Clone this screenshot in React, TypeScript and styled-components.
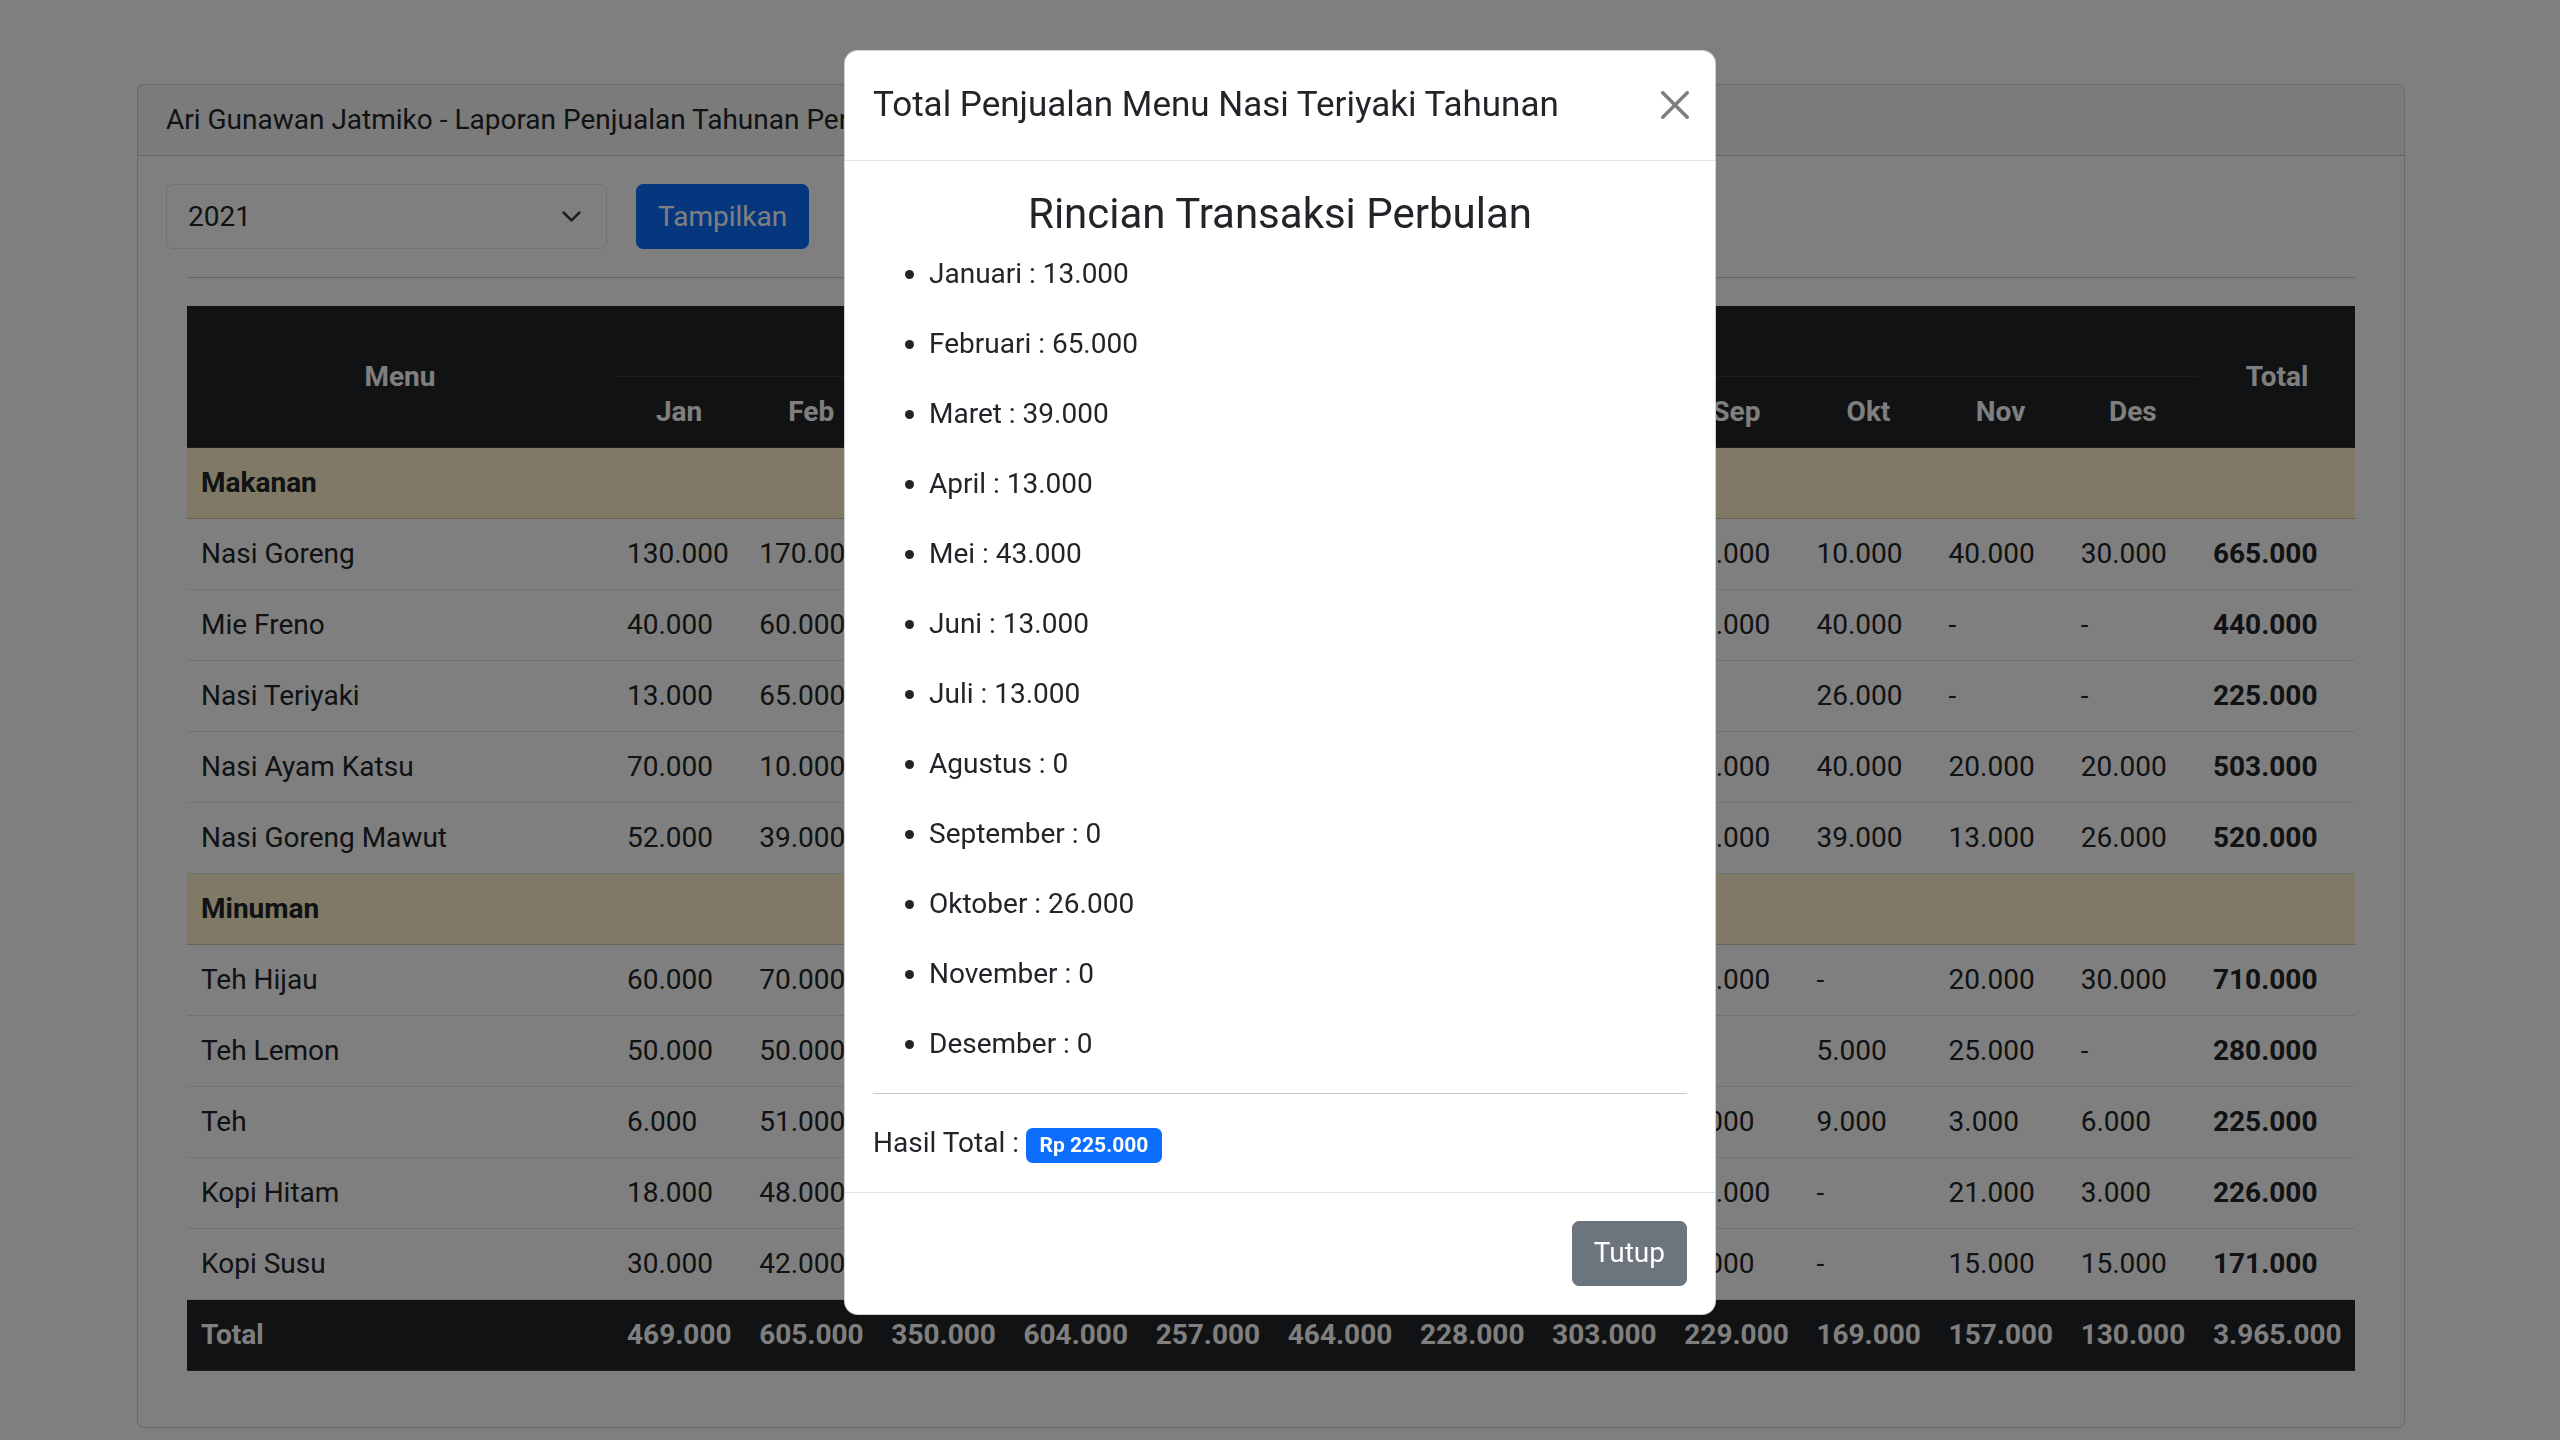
import React from 'react';
import styled, { createGlobalStyle } from 'styled-components';

const GlobalStyle = createGlobalStyle`
  *, *::before, *::after { box-sizing: border-box; }
  html, body { margin: 0; padding: 0; }
  body {
    background: #fff;
    font-family: Roboto, "Liberation Sans", Arial, sans-serif;
    font-size: 28px;
    line-height: 1.5;
    color: #212529;
    overflow: hidden;
  }
`;

const Page = styled.div`
  width: 2560px;
  height: 1440px;
  padding: 84px 0 0 116px;
`;

const Container = styled.div`
  width: 2310px;
  padding: 0 21px;
`;

const Card = styled.section`
  background: #fff;
  border: 1px solid rgba(0, 0, 0, 0.175);
  border-radius: 7px;
  overflow: hidden;
`;

const CardHeader = styled.header`
  padding: 14px 28px;
  line-height: 42px;
  background: rgba(0, 0, 0, 0.03);
  border-bottom: 1px solid rgba(0, 0, 0, 0.175);
  white-space: nowrap;
`;

const CardBody = styled.div`
  padding: 28px;
`;

const FilterRow = styled.div`
  display: flex;
  align-items: center;
  gap: 29px;
`;

const SelectBox = styled.div`
  width: 441px;
  height: 65px;
  display: flex;
  align-items: center;
  justify-content: space-between;
  padding: 0 21px;
  border: 1px solid #dee2e6;
  border-radius: 7px;
  line-height: 42px;
  background: #fff;
`;

const Chevron = styled.svg`
  width: 21px;
  height: 21px;
  margin-right: 3px;
`;

const Button = styled.button<{ $variant: 'primary' | 'secondary' }>`
  font-family: inherit;
  font-size: 28px;
  line-height: 42px;
  padding: 10.5px 21px;
  border-radius: 7px;
  color: #fff;
  cursor: pointer;
  background: ${(p) => (p.$variant === 'primary' ? '#0d6efd' : '#6c757d')};
  border: 1px solid ${(p) => (p.$variant === 'primary' ? '#0d6efd' : '#6c757d')};
`;

const Divider = styled.hr`
  margin: 28px 21px;
  border: 0;
  border-top: 1px solid #212529;
  opacity: 0.25;
`;

const TableWrap = styled.div`
  padding: 0 21px;
`;

const Table = styled.table`
  width: 100%;
  border-collapse: collapse;
  table-layout: fixed;
  margin-bottom: 28px;
  color: #212529;
`;

const HeadCell = styled.th`
  background: #212529;
  color: #fff;
  font-weight: 700;
  text-align: center;
  vertical-align: middle;
  padding: 14px;
  line-height: 42px;
  border-bottom: 1px solid #373b3e;
  white-space: nowrap;
`;

const Row = styled.tr<{ $group?: boolean }>`
  background: ${(p) => (p.$group ? '#fff3cd' : '#fff')};
`;

const Cell = styled.td<{ $bold?: boolean; $group?: boolean }>`
  padding: 14px;
  line-height: 42px;
  text-align: left;
  vertical-align: middle;
  white-space: nowrap;
  overflow: hidden;
  font-weight: ${(p) => (p.$bold ? 700 : 400)};
  border-bottom: 1px solid ${(p) => (p.$group ? '#ccc2a4' : '#dee2e6')};
`;

const FootCell = styled.td`
  background: #212529;
  color: #fff;
  font-weight: 700;
  padding: 14px;
  line-height: 42px;
  white-space: nowrap;
  border-bottom: 1px solid #373b3e;
`;

const Backdrop = styled.div`
  position: fixed;
  inset: 0;
  background: rgba(0, 0, 0, 0.5);
  z-index: 1050;
`;

const ModalDialog = styled.div`
  position: fixed;
  top: 50px;
  left: 844px;
  width: 872px;
  z-index: 1055;
`;

const ModalContent = styled.div`
  display: flex;
  flex-direction: column;
  background: #fff;
  border: 1px solid rgba(0, 0, 0, 0.175);
  border-radius: 14px;
`;

const ModalHeader = styled.div`
  display: flex;
  align-items: center;
  padding: 28px;
  border-bottom: 1px solid #dee2e6;
`;

const ModalTitle = styled.h5`
  margin: 0;
  font-size: 35px;
  font-weight: 400;
  line-height: 1.5;
  white-space: nowrap;
`;

const CloseButton = styled.button`
  width: 42px;
  height: 42px;
  padding: 7px;
  margin: -14px -9px -14px auto;
  border: 0;
  background: transparent;
  opacity: 0.5;
  display: flex;
  align-items: center;
  justify-content: center;
  cursor: pointer;
`;

const ModalBody = styled.div`
  padding: 28px;
`;

const BodyHeading = styled.h4`
  margin: 0 0 14px;
  font-size: 42px;
  font-weight: 400;
  line-height: 1.2;
  text-align: center;
`;

const MonthList = styled.ul`
  margin: 0;
  padding-left: 56px;
`;

const MonthItem = styled.li`
  line-height: 42px;
  margin-bottom: 28px;
  &:last-child {
    margin-bottom: 0;
  }
`;

const ModalRule = styled.hr`
  margin: 28px 0;
  border: 0;
  border-top: 1px solid #212529;
  opacity: 0.25;
`;

const TotalLine = styled.p`
  margin: 0;
  line-height: 42px;
`;

const Badge = styled.span`
  display: inline-block;
  padding: 7.35px 13.65px;
  font-size: 21px;
  font-weight: 700;
  line-height: 1;
  color: #fff;
  background: #0d6efd;
  border-radius: 6.5px;
  white-space: nowrap;
  vertical-align: baseline;
`;

const ModalFooter = styled.div`
  display: flex;
  justify-content: flex-end;
  align-items: center;
  padding: 21px;
  border-top: 1px solid #dee2e6;
`;

const FooterButton = styled(Button)`
  margin: 7px;
`;

const months = ['Jan', 'Feb', 'Mar', 'Apr', 'Mei', 'Jun', 'Jul', 'Agu', 'Sep', 'Okt', 'Nov', 'Des'];
const monthNames = [
  'Januari', 'Februari', 'Maret', 'April', 'Mei', 'Juni', 'Juli',
  'Agustus', 'September', 'Oktober', 'November', 'Desember',
];

type Item = { name: string; values: number[] };
type Group = { title: string; items: Item[] };

const groups: Group[] = [
  {
    title: 'Makanan',
    items: [
      { name: 'Nasi Goreng', values: [130, 170, 40, 80, 20, 60, 15, 30, 40, 10, 40, 30] },
      { name: 'Mie Freno', values: [40, 60, 30, 60, 20, 80, 40, 40, 30, 40, 0, 0] },
      { name: 'Nasi Teriyaki', values: [13, 65, 39, 13, 43, 13, 13, 0, 0, 26, 0, 0] },
      { name: 'Nasi Ayam Katsu', values: [70, 10, 50, 90, 30, 60, 37, 50, 26, 40, 20, 20] },
      { name: 'Nasi Goreng Mawut', values: [52, 39, 39, 91, 26, 52, 39, 65, 39, 39, 13, 26] },
    ],
  },
  {
    title: 'Minuman',
    items: [
      { name: 'Teh Hijau', values: [60, 70, 80, 150, 40, 100, 40, 70, 50, 0, 20, 30] },
      { name: 'Teh Lemon', values: [50, 50, 20, 40, 25, 30, 15, 20, 0, 5, 25, 0] },
      { name: 'Teh', values: [6, 51, 21, 45, 15, 33, 12, 15, 9, 9, 3, 6] },
      { name: 'Kopi Hitam', values: [18, 48, 21, 30, 18, 15, 12, 11, 29, 0, 21, 3] },
      { name: 'Kopi Susu', values: [30, 42, 10, 5, 20, 21, 5, 2, 6, 0, 15, 15] },
    ],
  },
];

const fmt = (k: number) => (k * 1000).toLocaleString('de-DE');
const cellFmt = (k: number) => (k === 0 ? '-' : fmt(k));
const sum = (a: number[]) => a.reduce((s, v) => s + v, 0);

const allItems = groups.flatMap((g) => g.items);
const colTotals = months.map((_, i) => sum(allItems.map((it) => it.values[i])));
const grandTotal = sum(colTotals);
const teriyaki = allItems.find((it) => it.name === 'Nasi Teriyaki')!;

const monthColWidth = (2168 - 426 - 156) / 12;

export default function App() {
  return (
    <>
      <GlobalStyle />
      <Page>
        <Container>
          <Card>
            <CardHeader>Ari Gunawan Jatmiko - Laporan Penjualan Tahunan Per Menu</CardHeader>
            <CardBody>
              <FilterRow>
                <SelectBox>
                  <span>2021</span>
                  <Chevron viewBox="0 0 16 16" fill="none">
                    <path d="m2 5 6 6 6-6" stroke="#343a40" strokeWidth="2" strokeLinecap="round" strokeLinejoin="round" />
                  </Chevron>
                </SelectBox>
                <Button $variant="primary">Tampilkan</Button>
              </FilterRow>
              <Divider />
              <TableWrap>
                <Table>
                  <colgroup>
                    <col style={{ width: 426 }} />
                    {months.map((m) => (
                      <col key={m} style={{ width: monthColWidth }} />
                    ))}
                    <col style={{ width: 156 }} />
                  </colgroup>
                  <thead>
                    <tr>
                      <HeadCell rowSpan={2}>Menu</HeadCell>
                      <HeadCell colSpan={12}>Bulan</HeadCell>
                      <HeadCell rowSpan={2}>Total</HeadCell>
                    </tr>
                    <tr>
                      {months.map((m) => (
                        <HeadCell key={m}>{m}</HeadCell>
                      ))}
                    </tr>
                  </thead>
                  <tbody>
                    {groups.map((g) => (
                      <React.Fragment key={g.title}>
                        <Row $group>
                          <Cell $group $bold colSpan={14}>{g.title}</Cell>
                        </Row>
                        {g.items.map((it) => (
                          <Row key={it.name}>
                            <Cell>{it.name}</Cell>
                            {it.values.map((v, i) => (
                              <Cell key={i}>{cellFmt(v)}</Cell>
                            ))}
                            <Cell $bold>{fmt(sum(it.values))}</Cell>
                          </Row>
                        ))}
                      </React.Fragment>
                    ))}
                  </tbody>
                  <tfoot>
                    <tr>
                      <FootCell>Total</FootCell>
                      {colTotals.map((t, i) => (
                        <FootCell key={i}>{fmt(t)}</FootCell>
                      ))}
                      <FootCell>{fmt(grandTotal)}</FootCell>
                    </tr>
                  </tfoot>
                </Table>
              </TableWrap>
            </CardBody>
          </Card>
        </Container>
      </Page>

      <Backdrop />
      <ModalDialog role="dialog" aria-modal="true">
        <ModalContent>
          <ModalHeader>
            <ModalTitle>Total Penjualan Menu Nasi Teriyaki Tahunan</ModalTitle>
            <CloseButton aria-label="Close">
              <svg width="28" height="28" viewBox="0 0 16 16">
                <path
                  fill="#000"
                  d="M.293.293a1 1 0 0 1 1.414 0L8 6.586 14.293.293a1 1 0 1 1 1.414 1.414L9.414 8l6.293 6.293a1 1 0 0 1-1.414 1.414L8 9.414l-6.293 6.293a1 1 0 0 1-1.414-1.414L6.586 8 .293 1.707a1 1 0 0 1 0-1.414z"
                />
              </svg>
            </CloseButton>
          </ModalHeader>
          <ModalBody>
            <BodyHeading>Rincian Transaksi Perbulan</BodyHeading>
            <MonthList>
              {monthNames.map((m, i) => (
                <MonthItem key={m}>
                  {m} : {teriyaki.values[i] === 0 ? '0' : fmt(teriyaki.values[i])}
                </MonthItem>
              ))}
            </MonthList>
            <ModalRule />
            <TotalLine>
              Hasil Total : <Badge>Rp {fmt(sum(teriyaki.values))}</Badge>
            </TotalLine>
          </ModalBody>
          <ModalFooter>
            <FooterButton $variant="secondary">Tutup</FooterButton>
          </ModalFooter>
        </ModalContent>
      </ModalDialog>
    </>
  );
}
